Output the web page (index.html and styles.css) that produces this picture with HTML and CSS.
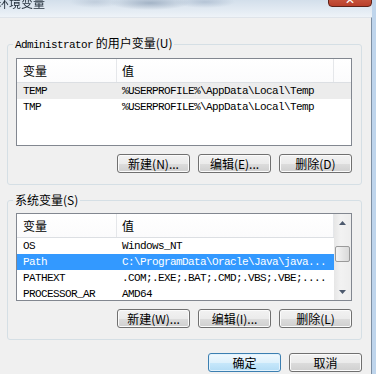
FILE: index.html
```html
<!DOCTYPE html>
<html lang="zh-CN">
<head>
    <meta charset="UTF-8">
    <meta name="viewport" content="width=device-width, initial-scale=1.0">
    <title>环境变量</title>
    <link rel="stylesheet" href="styles.css">
</head>
<body>
    <div class="window">
        <div class="titlebar">
            <span class="title">环境变量</span>
            <span class="close-btn">✕</span>
        </div>
        <div class="client">
            <fieldset class="group">
                <legend><span class="mono">Administrator</span> 的用户变量(U)</legend>
                <div class="list">
                    <div class="list-body">
                        <div class="list-head">
                            <div class="col-name">变量</div>
                            <div class="col-value">值</div>
                            <div class="col-rest"></div>
                        </div>
                        <div class="row row-inactive"><span class="col-name">TEMP</span><span class="col-value">%USERPROFILE%\AppData\Local\Temp</span></div>
                        <div class="row"><span class="col-name">TMP</span><span class="col-value">%USERPROFILE%\AppData\Local\Temp</span></div>
                    </div>
                </div>
                <div class="btn-row">
                    <button class="btn">新建(N)...</button>
                    <button class="btn">编辑(E)...</button>
                    <button class="btn">删除(D)</button>
                </div>
            </fieldset>

            <fieldset class="group group-system">
                <legend>系统变量(S)</legend>
                <div class="list">
                    <div class="list-body">
                        <div class="list-head">
                            <div class="col-name">变量</div>
                            <div class="col-value">值</div>
                        </div>
                        <div class="row"><span class="col-name">OS</span><span class="col-value">Windows_NT</span></div>
                        <div class="row row-selected"><span class="col-name">Path</span><span class="col-value">C:\ProgramData\Oracle\Java\java...</span></div>
                        <div class="row"><span class="col-name">PATHEXT</span><span class="col-value">.COM;.EXE;.BAT;.CMD;.VBS;.VBE;....</span></div>
                        <div class="row"><span class="col-name">PROCESSOR_AR</span><span class="col-value">AMD64</span></div>
                    </div>
                    <div class="scrollbar">
                        <div class="sb-arrow">
                            <svg width="7" height="4" viewBox="0 0 7 4"><path d="M0 4 L3.5 0 L7 4 Z" fill="#4d5a6e"/></svg>
                        </div>
                        <div class="sb-track">
                            <div class="sb-thumb"></div>
                        </div>
                        <div class="sb-arrow">
                            <svg width="7" height="4" viewBox="0 0 7 4"><path d="M0 0 L3.5 4 L7 0 Z" fill="#4d5a6e"/></svg>
                        </div>
                    </div>
                </div>
                <div class="btn-row">
                    <button class="btn">新建(W)...</button>
                    <button class="btn">编辑(I)...</button>
                    <button class="btn">删除(L)</button>
                </div>
            </fieldset>

            <div class="dialog-buttons">
                <button class="btn btn-default">确定</button>
                <button class="btn">取消</button>
            </div>
        </div>
    </div>
</body>
</html>
```

FILE: styles.css
```css
body {
    margin: 0;
    width: 376px;
    height: 374px;
    overflow: hidden;
    background-color: #bfd5ec;
    font-family: "Noto Sans CJK SC", "Liberation Sans", sans-serif;
    font-size: 12px;
    color: #000;
}
.window {
    display: flex;
    flex-direction: column;
    height: 374px;
    padding-right: 4px;
    box-sizing: border-box;
}

/* title bar (aero glass, blurred) */
.titlebar {
    flex: none;
    height: 17px;
    display: flex;
    justify-content: space-between;
    align-items: flex-start;
    overflow: hidden;
    background:
        radial-gradient(ellipse 40px 7px at 150px 3px, rgba(120, 140, 165, 0.55), transparent),
        radial-gradient(ellipse 30px 6px at 205px 2px, rgba(140, 160, 185, 0.45), transparent),
        radial-gradient(ellipse 25px 6px at 95px 2px, rgba(160, 175, 195, 0.4), transparent),
        linear-gradient(to bottom, #d3dfeb 0%, #e3ebf3 60%, #eef3f8 100%);
}
.title {
    margin-top: -4px;
    margin-left: -3px;
    line-height: 14px;
    color: #24303c;
    filter: blur(0.4px);
}
.close-btn {
    width: 44px;
    height: 18px;
    margin-top: -11px;
    box-sizing: border-box;
    border: 1px solid #5e2219;
    border-radius: 0 0 4px 4px;
    background: linear-gradient(to bottom, #e6a090, #c6533c 60%, #b9402b);
    color: #fff;
    font-size: 12px;
    line-height: 18px;
    text-align: center;
}

.client {
    flex: 1;
    background-color: #f0f0f0;
    border-top: 1px solid #dfe4ea;
    border-right: 1px solid #7d8fa3;
    padding: 18px 0 0 7px;
}
.mono {
    font-family: "Liberation Mono", monospace;
    font-size: 11px;
    letter-spacing: -0.6px;
}

/* group boxes */
.group {
    width: 355px;
    box-sizing: border-box;
    margin: 0;
    padding: 6px 9px 11px 8px;
    border: 1px solid #d5dfe5;
    border-radius: 3px;
}
.group legend {
    padding: 0 2px;
    margin-left: -3px;
    line-height: 14px;
}
.group-system {
    margin-top: 8px;
}

/* list views */
.list {
    display: flex;
    height: 88px;
    box-sizing: border-box;
    border: 1px solid #828790;
    background-color: #fff;
    overflow: hidden;
}
.list-body {
    flex: 1;
    overflow: hidden;
}
.list-head {
    display: flex;
    height: 23px;
    line-height: 23px;
    border-bottom: 1px solid #dcdfe3;
    background: linear-gradient(to bottom, #fff, #fbfbfc);
}
.list-head .col-name,
.list-head .col-value {
    border-right: 1px solid #e5e7ea;
}
.col-name {
    width: 100px;
    flex: none;
    box-sizing: border-box;
    padding-left: 6px;
    white-space: nowrap;
    overflow: hidden;
}
.col-value {
    width: 217px;
    flex: none;
    box-sizing: border-box;
    padding-left: 5px;
    white-space: nowrap;
    overflow: hidden;
}
.col-rest {
    flex: 1;
}
.row {
    display: flex;
    height: 16px;
    line-height: 16px;
    font-family: "Liberation Mono", monospace;
    font-size: 11px;
    letter-spacing: -0.6px;
}
.row-inactive {
    background-color: #ececec;
}
.row-selected {
    background-color: #3399ff;
    color: #fff;
}

/* scrollbar */
.scrollbar {
    width: 17px;
    flex: none;
    display: flex;
    flex-direction: column;
    background: linear-gradient(to right, #e6e6e6, #f2f2f2 40%, #ededed);
}
.sb-arrow {
    height: 17px;
    display: flex;
    align-items: center;
    justify-content: center;
}
.sb-track {
    flex: 1;
    padding-top: 15px;
}
.sb-thumb {
    height: 16px;
    margin: 0 1px;
    border: 1px solid #9a9a9a;
    border-radius: 2px;
    box-sizing: border-box;
    background: linear-gradient(to right, #f5f5f5, #e6e6e6 50%, #d9d9d9);
}

/* buttons */
.btn-row,
.dialog-buttons {
    display: flex;
    justify-content: flex-end;
    gap: 8px;
    margin-top: 8px;
}
.dialog-buttons {
    width: 355px;
    margin-top: 13px;
}
.btn {
    width: 73px;
    height: 19px;
    box-sizing: border-box;
    padding: 0;
    border: 1px solid #707070;
    border-radius: 3px;
    background: linear-gradient(to bottom, #f2f2f2 0%, #ebebeb 50%, #dddddd 50%, #cfcfcf 100%);
    box-shadow: inset 0 0 0 1px #fbfbfb;
    font-family: "Noto Sans CJK SC", "Liberation Sans", sans-serif;
    font-size: 12px;
    line-height: 16px;
    color: #000;
}
.btn-default {
    border-color: #3c7fb1;
    background: linear-gradient(to bottom, #f1f9fe 0%, #def1fc 50%, #c8e8fb 50%, #b3dcf5 100%);
    box-shadow: inset 0 0 0 1px #e3f3fd;
}
```
